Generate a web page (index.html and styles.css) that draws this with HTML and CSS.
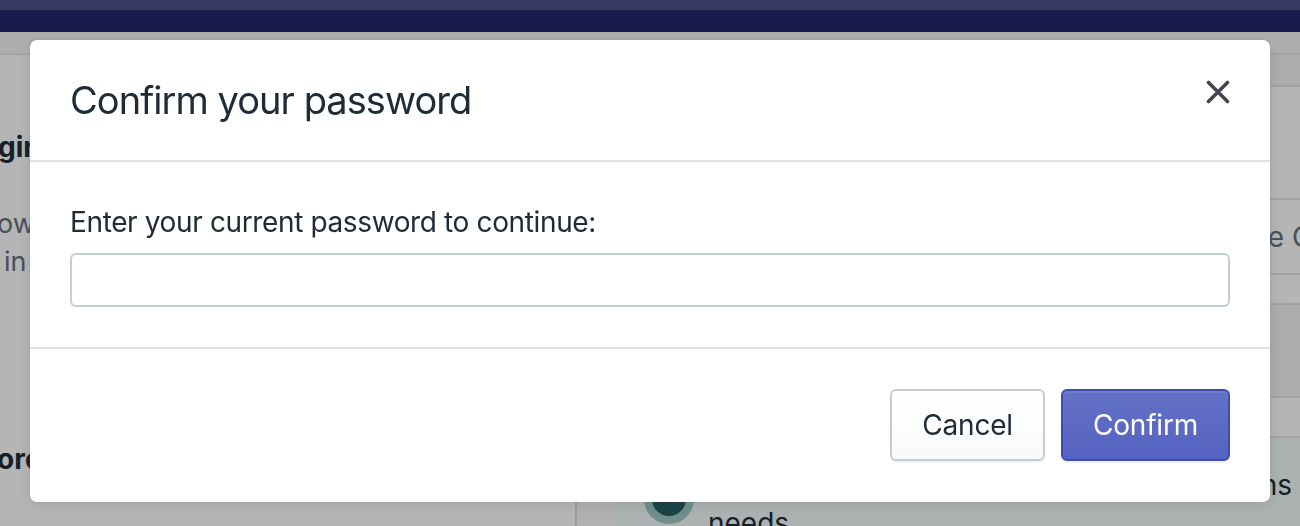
FILE: index.html
```html
<!DOCTYPE html>
<html lang="en">
<head>
<meta charset="utf-8">
<title>Confirm your password</title>
<link rel="stylesheet" href="styles.css">
</head>
<body>
<div class="page">
  <header class="topbar"><div class="topbar-strip"></div></header>
  <div class="subbar"></div>
  <div class="content">
    <aside class="left">
      <h3 class="left-title">gin settings</h3>
      <p class="left-text">ow customers to</p>
      <p class="left-text indent">in with accounts</p>
      <h3 class="left-title bottom">ore</h3>
    </aside>
    <div class="gutter"></div>
    <main class="right">
      <div class="band"></div>
      <div class="row tall"></div>
      <div class="row text-row"><span>Use Customer accounts</span></div>
      <div class="row thin"></div>
      <div class="band big"></div>
      <div class="row short"></div>
      <div class="notice">
        <span class="notice-icon"></span>
        <div class="notice-text">
          <span class="notice-line first">Customer accounts give customers the options</span>
          <span class="notice-line">needs</span>
        </div>
      </div>
    </main>
  </div>
</div>

<div class="backdrop">
  <div class="modal" role="dialog" aria-labelledby="modal-title">
    <div class="modal-header">
      <h2 class="modal-title" id="modal-title">Confirm your password</h2>
      <button class="close" type="button" aria-label="Close">
        <svg viewBox="0 0 24 24" width="24" height="24" aria-hidden="true">
          <path d="M2.5 2.5 L21.5 21.5 M21.5 2.5 L2.5 21.5" fill="none" stroke="#43474d" stroke-width="3.6" stroke-linecap="round"/>
        </svg>
      </button>
    </div>
    <div class="modal-body">
      <label class="field-label" for="pw">Enter your current password to continue:</label>
      <input class="field-input" id="pw" type="password">
    </div>
    <div class="modal-footer">
      <button class="btn" type="button">Cancel</button>
      <button class="btn btn-primary" type="button">Confirm</button>
    </div>
  </div>
</div>
</body>
</html>
```

FILE: styles.css
```css
* { box-sizing: border-box; }

html, body {
  margin: 0;
  padding: 0;
  width: 1300px;
  height: 526px;
  overflow: hidden;
  font-family: Inter, "Liberation Sans", sans-serif;
  color: #212b36;
  background: #fff;
}

/* ---------- background page ---------- */
.page {
  display: flex;
  flex-direction: column;
  height: 526px;
}

.topbar {
  height: 32px;
  background: #22276b;
  flex: none;
}
.topbar-strip {
  height: 10px;
  background: #4b528a;
}

.subbar {
  height: 23px;
  flex: none;
  border-bottom: 2px solid #e6e8eb;
  background: #f6f6f7;
}

.content {
  flex: 1;
  display: flex;
  min-height: 0;
}

.left {
  width: 577px;
  flex: none;
  border-right: 2px solid #dadcdf;
  padding-top: 72px;
  overflow: hidden;
  white-space: nowrap;
}
.left-title {
  margin: 0 0 38px -2px;
  font-size: 28px;
  font-weight: 700;
  line-height: 40px;
  color: #212b36;
}
.left-title.bottom {
  margin-top: 158px;
  margin-left: -3px;
}
.left-text {
  margin: 0;
  font-size: 27px;
  line-height: 38px;
  color: #637381;
  margin-left: -3px;
}
.left-text.indent { margin-left: 4px; }

.gutter {
  width: 39px;
  flex: none;
  background: #fafafa;
}

.right {
  flex: 1;
  display: flex;
  flex-direction: column;
  overflow: hidden;
  white-space: nowrap;
}
.band {
  height: 32px;
  background: #f4f4f5;
  border-bottom: 2px solid #e3e4e6;
  flex: none;
}
.band.big {
  height: 93px;
}
.row {
  flex: none;
  border-bottom: 2px solid #e3e4e6;
  background: #fff;
}
.row.tall { height: 113px; }
.row.text-row {
  height: 75px;
  display: flex;
  align-items: center;
  justify-content: flex-end;
  font-size: 28px;
  color: #637381;
}
.row.text-row span { margin-right: -250px; }
.row.thin { height: 30px; }
.row.short { height: 40px; }

.notice {
  flex: 1;
  background: #f1fbf9;
  display: flex;
  align-items: flex-start;
  padding: 28px 8px 0 28px;
  gap: 14px;
}
.notice-icon {
  width: 50px;
  height: 50px;
  margin-top: 8px;
  border-radius: 50%;
  background: #245e62;
  border: 8px solid #9fc8c4;
  flex: none;
}
.notice-text {
  flex: 1;
  display: flex;
  flex-direction: column;
  font-size: 28px;
  line-height: 38px;
  color: #212b36;
  overflow: hidden;
}
.notice-line.first {
  align-self: flex-end;
}

/* ---------- modal ---------- */
.backdrop {
  position: fixed;
  inset: 0;
  background: rgba(0, 0, 0, 0.29);
  padding: 40px 30px 0;
  display: flex;
  align-items: flex-start;
}

.modal {
  width: 1240px;
  height: 462px;
  background: #fff;
  border-radius: 7px;
  box-shadow: 0 0 0 1px rgba(63, 63, 68, 0.05), 0 2px 16px rgba(63, 63, 68, 0.15);
  display: flex;
  flex-direction: column;
  overflow: hidden;
}

.modal-header {
  height: 122px;
  flex: none;
  display: flex;
  align-items: center;
  justify-content: space-between;
  padding: 0 40px;
  border-bottom: 2px solid #dfe3e8;
}
.modal-title {
  margin: 0;
  font-size: 38px;
  font-weight: 400;
  line-height: 48px;
  letter-spacing: -0.95px;
  color: #212b36;
}
.close {
  width: 26px;
  height: 26px;
  padding: 0;
  margin: 0 -1px 16px 0;
  border: 0;
  background: transparent;
  display: flex;
  align-items: center;
  justify-content: center;
  cursor: pointer;
}

.modal-body {
  padding: 40px;
  border-bottom: 2px solid #dfe3e8;
  flex: none;
}
.field-label {
  display: block;
  font-size: 28px;
  line-height: 40px;
  letter-spacing: -0.37px;
  color: #212b36;
  margin-bottom: 11px;
}
.field-input {
  display: block;
  width: 100%;
  height: 54px;
  border: 2px solid #c4cdd5;
  border-radius: 6px;
  background: #fff;
  font: inherit;
  padding: 0 20px;
}

.modal-footer {
  flex: 1;
  display: flex;
  justify-content: flex-end;
  align-items: flex-start;
  gap: 16px;
  padding: 40px 40px 0;
}

.btn {
  height: 72px;
  padding: 0 30px;
  border: 2px solid #c4cdd5;
  border-radius: 6px;
  background: linear-gradient(#ffffff, #f9fafb);
  box-shadow: 0 2px 0 rgba(22, 29, 37, 0.05);
  font-family: Inter, "Liberation Sans", sans-serif;
  font-size: 28px;
  letter-spacing: -0.2px;
  color: #212b36;
  cursor: pointer;
}
.btn-primary {
  padding: 0 30px;
  border-color: #3f4eae;
  background: linear-gradient(#6371c7, #5563c1);
  box-shadow: inset 0 2px 0 0 #6f7bcb, 0 2px 0 rgba(22, 29, 37, 0.05);
  color: #fff;
}
```
